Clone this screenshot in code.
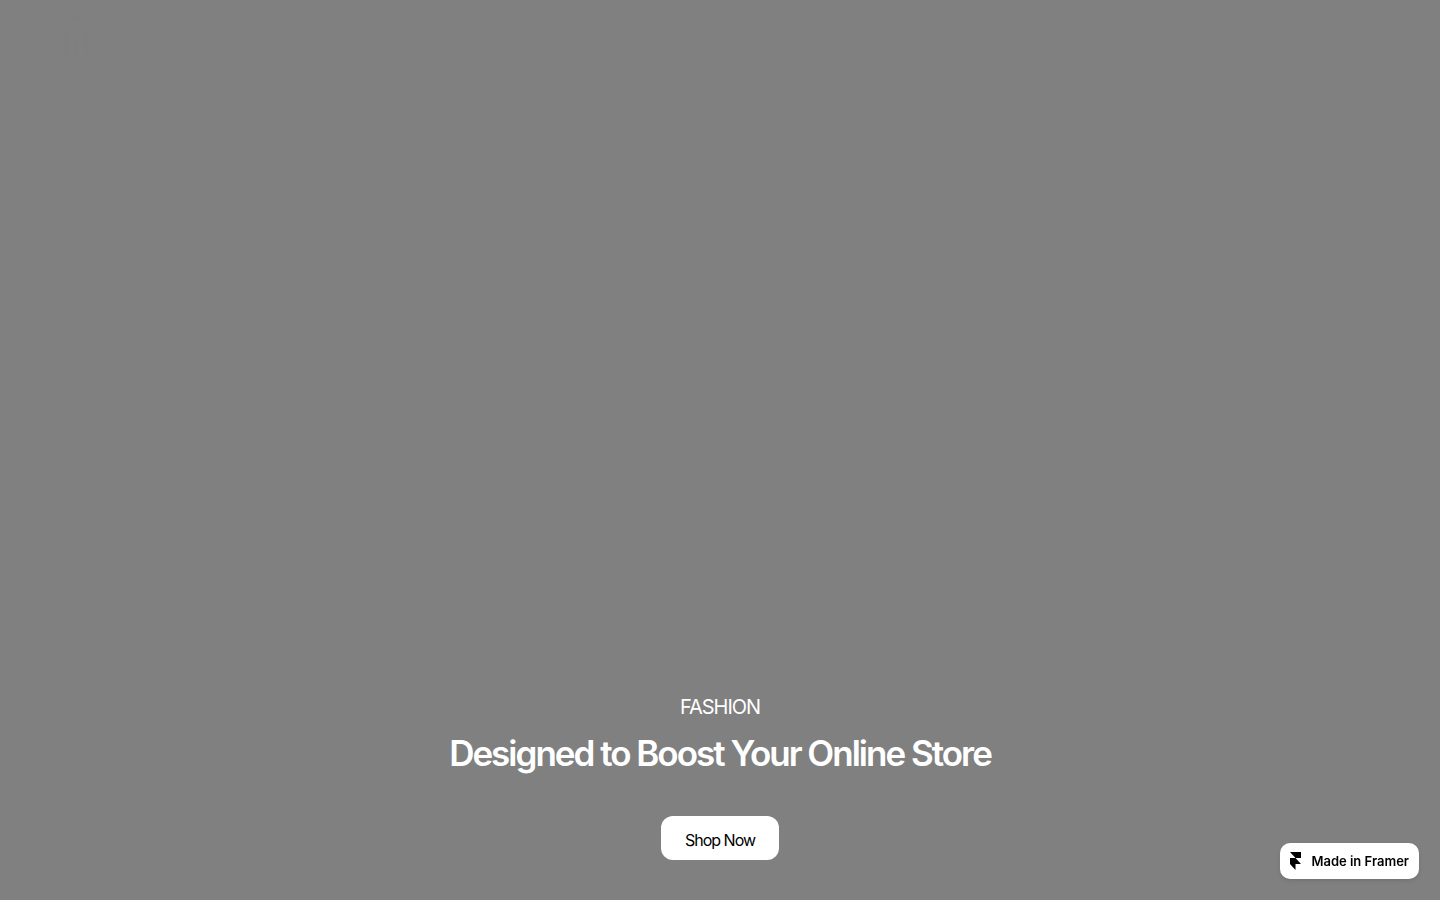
<main class="hero">
  <header>
    <a class="logo" href="#home" aria-label="Home">
      <svg viewBox="0 0 28 42" width="28" height="42" aria-hidden="true">
        <path d="M7 6V3l3 1 4-4 4 4 3-1v3Z" />
        <path d="M1 14h4v26H1ZM22 14h4v26h-4ZM11 26h4v18h-4Z" />
      </svg>
    </a>
  </header>
  <section class="content">
    <p class="eyebrow">FASHION</p>
    <h1>Designed to Boost Your Online Store</h1>
    <a class="shop" href="#shop">Shop Now</a>
  </section>
  <a class="badge" href="#framer">
    <svg viewBox="0 0 11 18" width="11" height="18" aria-hidden="true">
      <path d="M0 0H11V6H5.5ZM0 6H5.5L11 12H5.5V18L0 12Z" />
    </svg>
    <span>Made in Framer</span>
  </a>
</main>

<style>
  :global(body) {
    margin: 0;
    background: #808080;
  }
  .hero {
    min-height: 100vh;
    box-sizing: border-box;
    padding: 14px 40px 40px;
    display: flex;
    flex-direction: column;
    justify-content: space-between;
    font-family: Inter, sans-serif;
    background: #808080;
  }
  header {
    display: flex;
    padding: 0 23px;
  }
  .logo {
    display: flex;
    fill: #7f7f7f;
  }
  .content {
    display: flex;
    flex-direction: column;
    align-items: center;
    text-align: center;
    color: #fff;
  }
  .eyebrow {
    margin: 0 0 8px;
    font-size: 20px;
    line-height: 30px;
    letter-spacing: -1px;
  }
  h1 {
    margin: 0 0 40px;
    font-size: 35px;
    line-height: 46px;
    font-weight: 600;
    letter-spacing: -2px;
  }
  .shop {
    padding: 12px 24px 8px;
    border-radius: 12px;
    background: #fff;
    color: #000;
    font-size: 16px;
    line-height: 24px;
    letter-spacing: -1px;
    text-decoration: none;
  }
  .badge {
    position: fixed;
    right: 21px;
    bottom: 21px;
    display: flex;
    align-items: center;
    gap: 10px;
    height: 36px;
    padding: 0 10px;
    border-radius: 10px;
    background: #fff;
    color: #000;
    font-size: 13px;
    font-weight: 600;
    text-decoration: none;
    box-shadow: 0 2px 4px rgba(0, 0, 0, 0.1);
  }
</style>
